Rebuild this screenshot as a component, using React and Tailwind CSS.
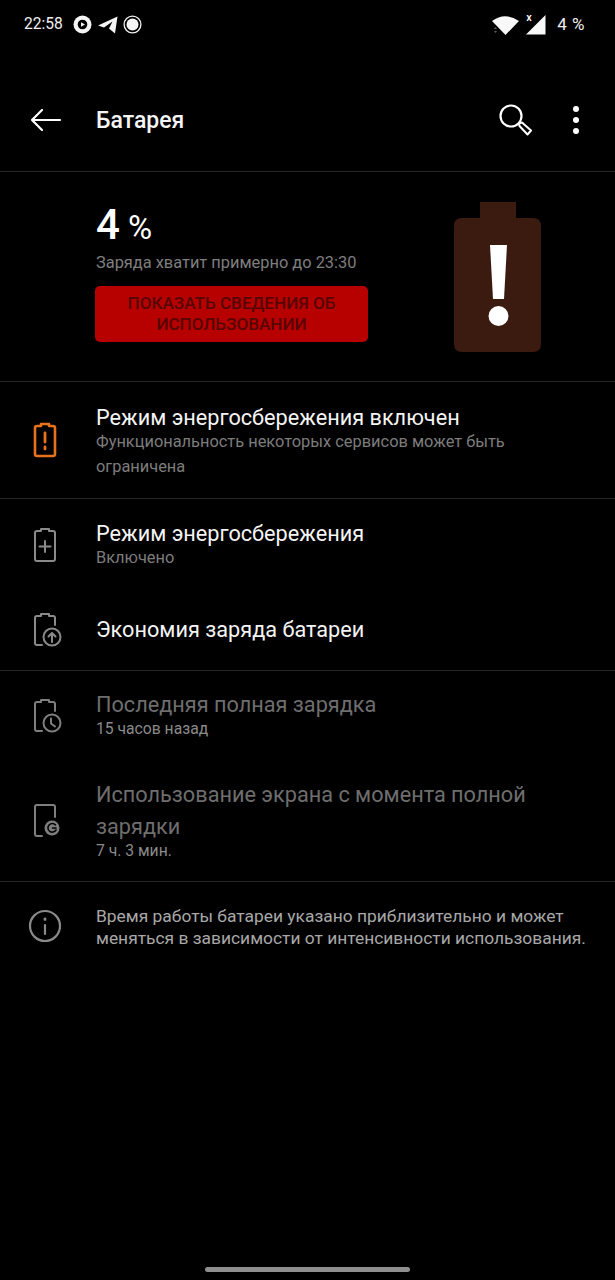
const F = "font-['Roboto',sans-serif]";

const Batt = ({ children, color = "#8a8a8a" }) => (
  <svg width="26" height="36" viewBox="0 0 26 36" fill="none" stroke={color} strokeWidth="2" strokeLinejoin="round" strokeLinecap="round">
    {children}
  </svg>
);

function Row({ icon, title, sub, dim, h }) {
  return (
    <div className={`flex items-center ${h}`}>
      <div className="w-[96px] flex justify-center pr-[7px] shrink-0">{icon}</div>
      <div className="flex-1 min-w-0 pr-[20px]">
        <div className={`text-[21.7px] leading-[32px] ${dim ? "text-[#6e6e6e]" : "text-[#f4f4f4]"}`}>{title}</div>
        {sub && <div className={`leading-[26px] -mt-[5px] ${dim ? "text-[15.7px] text-[#8a8a8a]" : "text-[16.4px] text-[#7c7c7c]"}`}>{sub}</div>}
      </div>
    </div>
  );
}

export default function App() {
  return (
    <div className={`${F} w-[615px] h-[1280px] bg-black text-white flex flex-col overflow-hidden relative`}>
      {/* status bar */}
      <div className="h-[50px] flex items-center justify-between pl-[24px] pr-[30px] shrink-0">
        <div className="flex items-center">
          <span className="text-[15.6px] text-[#f0f0f0] mr-[10px]">22:58</span>
          <svg width="19" height="19" viewBox="0 0 19 19" className="mr-[6px]">
            <circle cx="9.5" cy="9.5" r="9" fill="#f5f5f5" />
            <circle cx="9.5" cy="9.5" r="4.8" fill="#000" />
            <path d="M8 7.2 L12 9.5 L8 11.8Z" fill="#f5f5f5" />
          </svg>
          <svg width="20" height="19" viewBox="0 0 20 19" className="mr-[5px]">
            <path d="M0 10.5 L19.5 1.5 L17 18.5 L11 13.5 L14.5 6.5 L6 12.5Z" fill="#f5f5f5" />
          </svg>
          <svg width="19" height="19" viewBox="0 0 19 19">
            <circle cx="9.5" cy="9.5" r="8.4" fill="none" stroke="#f0f0f0" strokeWidth="1.3" />
            <circle cx="9.5" cy="9.5" r="6" fill="#f5f5f5" />
          </svg>
        </div>
        <div className="flex items-center">
          <svg width="27" height="20" viewBox="0 0 27 20" className="mr-[7px]">
            <path d="M0 6 Q13 -3.5 27 6 L13.5 20Z" fill="#f8f8f8" />
            <path d="M2 14 L3.5 12 L5 14Z M2 16 L3.5 18 L5 16Z" fill="#5e5e5e" />
          </svg>
          <div className="relative w-[20px] h-[20px] mr-[11px]">
            <svg width="20" height="20" viewBox="0 0 20 20"><path d="M0 19.5 L19.5 0 V19.5Z" fill="#f8f8f8" /></svg>
            <span className="absolute left-[0px] -top-[4px] text-[11px] leading-[14px] font-medium">x</span>
          </div>
          <span className="text-[17px] tracking-[0.5px] text-[#eeeeee]">4 %</span>
        </div>
      </div>

      {/* toolbar */}
      <div className="h-[122px] flex items-start border-b border-[#262626] shrink-0">
        <div className="mt-[54px] h-[32px] flex items-center w-full">
          <div className="w-[96px] pl-[30px] shrink-0">
            <svg width="32" height="24" viewBox="0 0 32 24" fill="none" stroke="#fff" strokeWidth="2.2" strokeLinecap="round" strokeLinejoin="round">
              <path d="M30 12 H2 M12 2 L2 12 L12 22" />
            </svg>
          </div>
          <div className="text-[23px] font-medium text-[#f4f4f4] flex-1 pt-[3px]">Батарея</div>
          <svg width="36" height="34" viewBox="0 0 36 34" fill="none" stroke="#fff" className="mr-[39px]">
            <circle cx="13" cy="13" r="10.5" strokeWidth="2.2" />
            <path d="M21 20.5 L24 19.5 L33 27.5 L29.5 31.5 L21.5 23Z" strokeWidth="2" strokeLinejoin="round" />
          </svg>
          <div className="flex flex-col gap-[4.5px] mr-[36px]">
            <span className="w-[6.5px] h-[6.5px] rounded-full bg-white" />
            <span className="w-[6.5px] h-[6.5px] rounded-full bg-white" />
            <span className="w-[6.5px] h-[6.5px] rounded-full bg-white" />
          </div>
        </div>
      </div>

      {/* hero */}
      <div className="h-[210px] flex border-b border-[#262626] shrink-0">
        <div className="w-[95px] shrink-0" />
        <div className="w-[273px] pt-[26px] shrink-0">
          <div className="flex items-baseline h-[54px] pl-[1px]">
            <span className="text-[42px] leading-[54px] font-medium text-white">4</span>
            <span className="text-[33px] leading-[54px] ml-[8px] text-white">%</span>
          </div>
          <div className="text-[16.4px] leading-[24px] text-[#7e7e7e] pl-[1px] -mt-[1px]">Заряда хватит примерно до 23:30</div>
          <button className="mt-[11px] w-[273px] h-[56px] rounded-[5px] bg-[#b70000] text-[#560505] text-[17.1px] leading-[21px] font-medium px-[20px] flex items-center justify-center text-center">
            ПОКАЗАТЬ СВЕДЕНИЯ ОБ ИСПОЛЬЗОВАНИИ
          </button>
        </div>
        <div className="flex-1 flex justify-start pl-[86px] pt-[30px]">
          <svg width="87" height="150" viewBox="0 0 87 150">
            <path d="M26 0 H62 V16 H79 Q87 16 87 24 V142 Q87 150 79 150 H8 Q0 150 0 142 V24 Q0 16 8 16 H26Z" fill="#3b1a10" />
            <path d="M36 43 H53 L50 97 H39Z" fill="#fff" />
            <circle cx="44.5" cy="114" r="10" fill="#fff" />
          </svg>
        </div>
      </div>

      {/* warning */}
      <div className="border-b border-[#262626] h-[117px] flex items-center shrink-0">
        <div className="w-[96px] flex justify-center pr-[7px] shrink-0">
          <Batt color="#e8711c">
            <path d="M9 4 V2 H17 V4 H21 Q23 4 23 6 V32 Q23 34 21 34 H5 Q3 34 3 32 V6 Q3 4 5 4Z" strokeWidth="2.6" />
            <path d="M13 11 V20 M13 25 V27" strokeWidth="2.8" />
          </Batt>
        </div>
        <div className="flex-1 pr-[40px] mt-[2px]">
          <div className="text-[21.7px] leading-[30px] text-[#f4f4f4]">Режим энергосбережения включен</div>
          <div className="text-[16.4px] leading-[25px] text-[#7c7c7c] -mt-[4px]">Функциональность некоторых сервисов может быть ограничена</div>
        </div>
      </div>

      {/* saver */}
      <div className="border-b border-[#262626] h-[172px] shrink-0 flex flex-col">
        <Row
          h="h-[92px]"
          title="Режим энергосбережения"
          sub="Включено"
          icon={
            <Batt>
              <path d="M9 4 V2 H17 V4 H21 Q23 4 23 6 V32 Q23 34 21 34 H5 Q3 34 3 32 V6 Q3 4 5 4Z" />
              <path d="M13 14 V25 M7.5 19.5 H18.5" />
            </Batt>
          }
        />
        <Row
          h="h-[80px]"
          title="Экономия заряда батареи"
          icon={
            <svg width="30" height="36" viewBox="0 0 30 36" fill="none" stroke="#8a8a8a" strokeWidth="2" strokeLinecap="round" strokeLinejoin="round" className="ml-[4px]">
              <path d="M10 33 H5 Q3 33 3 31 V6 Q3 4 5 4 H9 V2 H17 V4 H21 Q23 4 23 6 V13" />
              <circle cx="20" cy="25" r="8.5" />
              <path d="M20 30 V21 M16.5 24.5 L20 21 L23.5 24.5" />
            </svg>
          }
        />
      </div>

      {/* history */}
      <div className="border-b border-[#262626] h-[211px] shrink-0 flex flex-col">
        <Row
          h="h-[100px] pb-[10px]"
          dim
          title="Последняя полная зарядка"
          sub="15 часов назад"
          icon={
            <svg width="30" height="36" viewBox="0 0 30 36" fill="none" stroke="#7e7e7e" strokeWidth="2" strokeLinecap="round" strokeLinejoin="round" className="ml-[4px]">
              <path d="M10 33 H5 Q3 33 3 31 V6 Q3 4 5 4 H9 V2 H17 V4 H21 Q23 4 23 6 V13" />
              <circle cx="20" cy="25" r="8.5" />
              <path d="M19 20.5 V25.5 L23 28.5" />
            </svg>
          }
        />
        <Row
          h="h-[111px] pb-[9px]"
          dim
          title="Использование экрана с момента полной зарядки"
          sub="7 ч. 3 мин."
          icon={
            <svg width="30" height="36" viewBox="0 0 30 36" fill="none" stroke="#7e7e7e" strokeWidth="2" strokeLinecap="round" strokeLinejoin="round" className="ml-[4px]">
              <path d="M10 33 H5 Q3 33 3 31 V4 Q3 2 5 2 H21 Q23 2 23 4 V14" />
              <circle cx="20" cy="25" r="7.5" fill="#7e7e7e" stroke="none" />
              <path d="M23.5 22 A4.3 4.3 0 1 0 24 27 M20.5 25 H24" stroke="#000" strokeWidth="1.6" />
            </svg>
          }
        />
      </div>

      {/* info */}
      <div className="flex items-start pt-[23px] shrink-0">
        <div className="w-[96px] flex justify-center pr-[7px] shrink-0">
          <svg width="34" height="34" viewBox="0 0 34 34" fill="none" stroke="#8a8a8a" strokeWidth="2.2" strokeLinecap="round" className="mt-[4px]">
            <circle cx="17" cy="17" r="15" />
            <path d="M17 16 V25" />
            <path d="M17 10 V10.5" strokeWidth="2.8" />
          </svg>
        </div>
        <div className="text-[17.4px] leading-[22px] text-[#a8a8a8] flex-1 pr-[20px]">
          Время работы батареи указано приблизительно и может меняться в зависимости от интенсивности использования.
        </div>
      </div>

      {/* home indicator */}
      <div className="absolute bottom-[8px] left-[205px] w-[205px] h-[5px] rounded-full bg-[#8f8f8f]" />
    </div>
  );
}
